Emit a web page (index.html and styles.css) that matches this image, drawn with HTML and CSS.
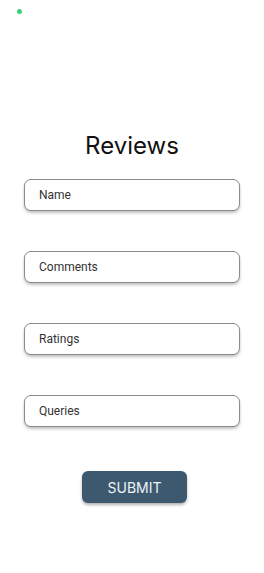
FILE: index.html
```html
<!DOCTYPE html>
<html lang="en">
<head>
  <meta charset="UTF-8" />
  <meta name="viewport" content="width=device-width, initial-scale=1.0" />
  <title>Reviews</title>
  <link rel="stylesheet" href="styles.css">
</head>
<body>
  <div class="status-dot"></div>
  <div class="review-container">
    <h1>Reviews</h1>
    <form class="review-form">
      <input type="text" class="review-input" placeholder="Name" />
      <input type="text" class="review-input" placeholder="Comments" />
      <input type="text" class="review-input" placeholder="Ratings" />
      <input type="text" class="review-input" placeholder="Queries" />
      <button type="submit" class="submit-btn">SUBMIT</button>
    </form>
  </div>
</body>
</html>
```

FILE: styles.css
```css
* {
  margin: 0;
  padding: 0;
  box-sizing: border-box;
  font-family: Inter, Roboto, 'Liberation Sans', sans-serif;
}

body {
  background-color: #ffffff;
  width: 264px;
  height: 573px;
  overflow: hidden;
}

.status-dot {
  width: 5px;
  height: 5px;
  border-radius: 50%;
  background: #3ecf7a;
  margin: 9px 0 0 17px;
}

.review-container {
  display: flex;
  flex-direction: column;
  align-items: center;
  padding-top: 116px;
}

h1 {
  font-size: 24px;
  font-weight: 400;
  color: #111;
  line-height: 32px;
  margin-bottom: 17px;
}

.review-form {
  display: flex;
  flex-direction: column;
  align-items: center;
  gap: 40px;
}

.review-input {
  width: 216px;
  height: 32px;
  padding: 0 14px;
  border: 1px solid #8a8a8a;
  border-radius: 7px;
  background: #fff;
  box-shadow: 0 2px 3px rgba(0, 0, 0, 0.25);
  font-family: Roboto, 'Liberation Sans', sans-serif;
  font-size: 12px;
  color: #333;
  outline: none;
}

.review-input::placeholder {
  color: #333;
}

.submit-btn {
  width: 105px;
  height: 32px;
  margin: 4px 0 0 5px;
  border: none;
  border-radius: 6px;
  background: #3c5970;
  color: #eef2f5;
  font-size: 14px;
  box-shadow: 0 2px 3px rgba(0, 0, 0, 0.3);
  cursor: pointer;
}
```
